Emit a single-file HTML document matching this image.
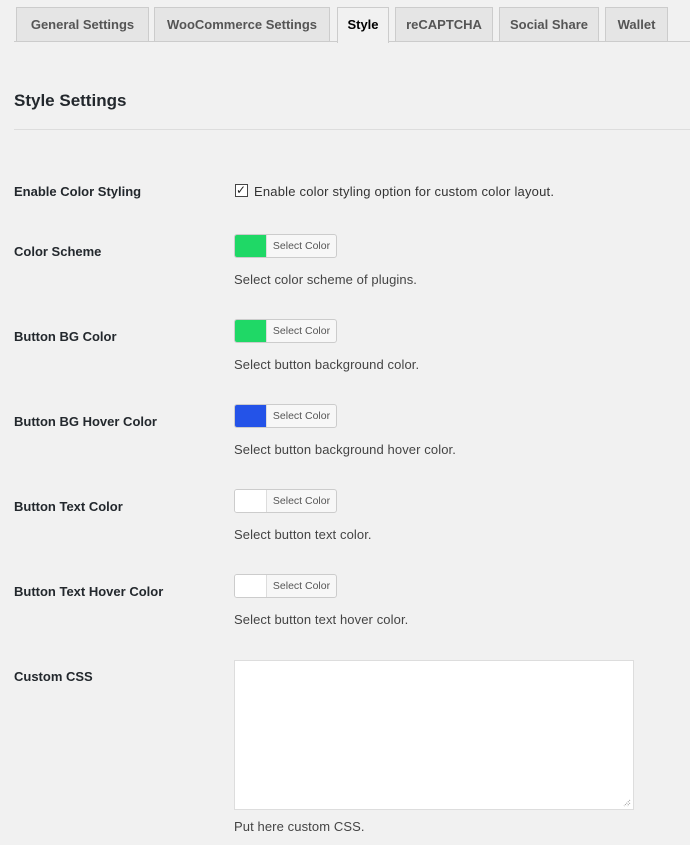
<!DOCTYPE html>
<html><head><meta charset="utf-8"><style>
body{margin:0;background:#f1f1f1;font-family:"Liberation Sans",sans-serif;font-size:13px;color:#23282d;width:690px;height:845px;overflow:hidden;position:relative}
.a{position:absolute}
.tab{position:absolute;top:7px;height:34px;background:#e5e5e5;border:1px solid #ccc;border-bottom:none;font-weight:bold;font-size:13px;color:#555;line-height:34px;text-align:center;box-sizing:border-box}
.line{position:absolute;left:14px;right:0;top:41px;border-top:1px solid #ccc}
.lab{position:absolute;left:14px;font-weight:bold;font-size:13px;color:#23282d}
.desc{position:absolute;left:234px;font-size:13px;color:#444;letter-spacing:0.1px}
.btn{position:absolute;left:234px;width:103px;height:24px;border:1px solid #ccc;border-radius:3px;background:#f7f7f7;box-sizing:border-box;overflow:hidden}
.btn .sw{position:absolute;left:0;top:0;width:31px;height:22px}
.btn span{position:absolute;left:31px;right:0;top:0;line-height:22px;text-align:center;font-size:10.5px;color:#555;border-left:1px solid #ddd}
</style></head><body>
<div class="line"></div>
<div class="tab" style="left:16px;width:133px">General Settings</div>
<div class="tab" style="left:154px;width:176px">WooCommerce Settings</div>
<div class="tab" style="left:337px;width:52px;height:36px;background:#f1f1f1;color:#000">Style</div>
<div class="tab" style="left:395px;width:98px">reCAPTCHA</div>
<div class="tab" style="left:499px;width:100px">Social Share</div>
<div class="tab" style="left:605px;width:63px">Wallet</div>
<div class="a" style="left:14px;top:91px;font-size:17px;font-weight:bold;color:#23282d">Style Settings</div>
<div class="a" style="left:14px;right:0;top:129px;border-top:1px solid #ddd"></div>

<div class="lab" style="top:184px">Enable Color Styling</div>
<div class="a" style="left:235px;top:184px;width:11px;height:11px;border:1px solid #444;background:#fff"></div>
<div class="a" style="left:236px;top:183px;font-size:12px;color:#222">✓</div>
<div class="a" style="left:254px;top:184px;color:#333;letter-spacing:0.2px">Enable color styling option for custom color layout.</div>

<div class="lab" style="top:244px">Color Scheme</div>
<div class="btn" style="top:234px"><div class="sw" style="background:#1fd866"></div><span>Select Color</span></div>
<div class="desc" style="top:272px">Select color scheme of plugins.</div>

<div class="lab" style="top:329px">Button BG Color</div>
<div class="btn" style="top:319px"><div class="sw" style="background:#1fd866"></div><span>Select Color</span></div>
<div class="desc" style="top:357px">Select button background color.</div>

<div class="lab" style="top:414px">Button BG Hover Color</div>
<div class="btn" style="top:404px"><div class="sw" style="background:#2453e8"></div><span>Select Color</span></div>
<div class="desc" style="top:442px">Select button background hover color.</div>

<div class="lab" style="top:499px">Button Text Color</div>
<div class="btn" style="top:489px"><div class="sw" style="background:#fff"></div><span>Select Color</span></div>
<div class="desc" style="top:527px">Select button text color.</div>

<div class="lab" style="top:584px">Button Text Hover Color</div>
<div class="btn" style="top:574px"><div class="sw" style="background:#fff"></div><span>Select Color</span></div>
<div class="desc" style="top:612px">Select button text hover color.</div>

<div class="lab" style="top:669px">Custom CSS</div>
<div class="a" style="left:234px;top:660px;width:400px;height:150px;background:#fff;border:1px solid #ddd;box-sizing:border-box">
<svg style="position:absolute;right:2px;bottom:2px" width="8" height="8"><path d="M7 1L1 7M7 4L4 7" stroke="#999" stroke-width="1" stroke-dasharray="1 1"/></svg>
</div>
<div class="desc" style="top:819px">Put here custom CSS.</div>
</body></html>
